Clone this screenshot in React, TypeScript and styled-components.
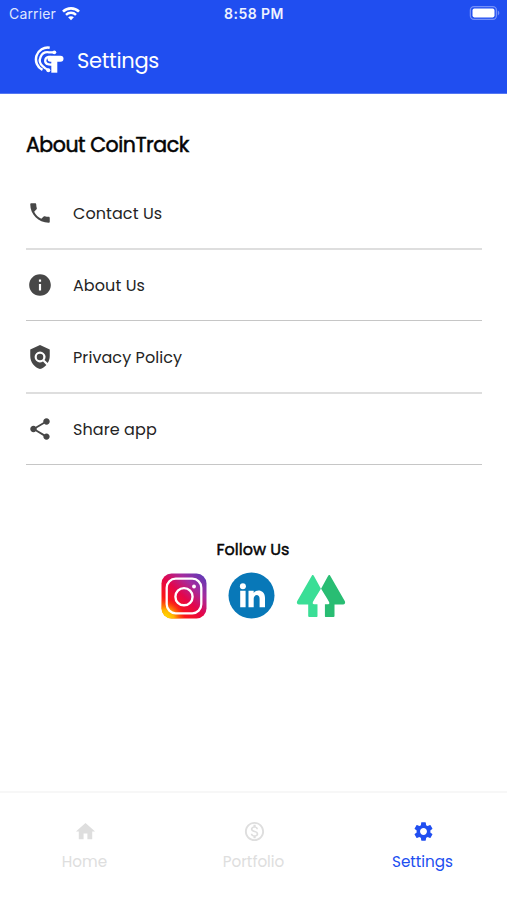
import React from "react";
import styled, { createGlobalStyle } from "styled-components";
import {
  MdPhone,
  MdInfo,
  MdPolicy,
  MdShare,
  MdHome,
  MdSettings,
  MdOutlineMonetizationOn,
} from "react-icons/md";
import type { IconType } from "react-icons";

const BLUE = "#204ef0";

const GlobalStyle = createGlobalStyle`
  * { box-sizing: border-box; }
  body {
    margin: 0;
    background: #fff;
    font-family: Poppins, Inter, "Liberation Sans", sans-serif;
  }
  svg { display: block; flex: none; }
`;

const Screen = styled.div`
  width: 507px;
  height: 900px;
  display: flex;
  flex-direction: column;
  overflow: hidden;
  background: #fff;
`;

const Header = styled.header`
  height: 94px;
  flex: none;
  background: ${BLUE};
  color: #fff;
  border-bottom: 1px solid #5577f2;
`;

const StatusBar = styled.div`
  height: 27px;
  padding: 0 7px 0 9px;
  display: grid;
  grid-template-columns: 1fr auto 1fr;
  align-items: center;
  font-family: Inter, "Liberation Sans", sans-serif;
`;

const Carrier = styled.div`
  display: flex;
  align-items: center;
  gap: 6px;
  font-size: 14px;
  letter-spacing: 0.15px;
  color: #dfe6fe;
`;

const Clock = styled.div`
  padding-right: 1px;
  font-size: 14px;
  font-weight: 600;
  letter-spacing: 0.45px;
  color: #eef2ff;
`;

const BatterySlot = styled.div`
  display: flex;
  justify-content: flex-end;
  padding-bottom: 2px;
`;

const TitleBar = styled.div`
  height: 66px;
  padding-left: 34px;
  display: flex;
  align-items: center;
  gap: 13px;
`;

const ScreenTitle = styled.h1`
  margin: 1px 0 0;
  font-size: 21px;
  font-weight: 400;
  line-height: 30px;
  letter-spacing: -0.3px;
`;

const Content = styled.main`
  flex: 1;
  padding: 36px 25px 0 26px;
`;

const SectionTitle = styled.h2`
  margin: 0;
  height: 30px;
  font-size: 20.5px;
  line-height: 30px;
  font-weight: 400;
  letter-spacing: -0.45px;
  -webkit-text-stroke: 0.5px currentColor;
  color: #050505;
`;

const List = styled.ul`
  list-style: none;
  margin: 0;
  padding: 18px 0 0;
`;

const Row = styled.li<{ $thin?: boolean }>`
  height: ${(p) => (p.$thin ? 71 : 72)}px;
  padding-left: 1px;
  display: flex;
  align-items: center;
  gap: 20px;
  border-bottom: ${(p) => (p.$thin ? "1px solid #c6c6c6" : "2px solid #dedede")};
  color: #474747;

  & + & {
    margin-top: 0;
  }
`;

const TallRow = styled(Row)`
  height: 73px;
`;

const RowLabel = styled.span`
  margin-top: 2px;
  font-size: 16px;
  line-height: 24px;
  letter-spacing: 0.08px;
  color: #242424;
`;

const Follow = styled.section`
  display: flex;
  flex-direction: column;
  align-items: center;
  padding-top: 73px;
`;

const FollowTitle = styled.h3`
  margin: 0;
  padding-right: 2px;
  font-size: 16px;
  font-weight: 400;
  line-height: 24px;
  -webkit-text-stroke: 0.45px currentColor;
  color: #050505;
`;

const Socials = styled.div`
  display: flex;
  align-items: center;
  gap: 21px;
  margin-top: 10px;
  padding-right: 2px;
`;

const TabBar = styled.nav`
  height: 109px;
  flex: none;
  display: grid;
  grid-template-columns: repeat(3, 1fr);
  border-top: 2px solid #f7f7f7;
`;

const Tab = styled.div<{ $active?: boolean }>`
  display: flex;
  flex-direction: column;
  align-items: center;
  padding-top: 27px;
  gap: 7px;
  color: ${(p) => (p.$active ? BLUE : "#dedede")};

  svg {
    margin-left: 2px;
  }
`;

const TabLabel = styled.span`
  font-size: 15.2px;
  line-height: 24px;
`;

const WifiIcon = () => (
  <svg width="18" height="14" viewBox="0 0 18 14" fill="none" stroke="#fff">
    <path d="M1 4.700C5.400.2 12.600.2 17 4.700" strokeWidth="2.600" />
    <path d="M4 7.900c2.800-2.800 7.200-2.800 10 0" strokeWidth="2.400" />
    <path d="M9 13.200 6.100 10.300c1.600-1.500 4.200-1.500 5.800 0Z" fill="#fff" stroke="none" />
  </svg>
);

const BatteryIcon = () => (
  <svg width="31" height="14" viewBox="0 0 31 14" fill="none">
    <rect x="1.400" y=".7" width="26" height="12.600" rx="3.500" stroke="#7590f8" strokeWidth="1.300" />
    <rect x="3.500" y="2.600" width="22" height="8.800" rx="1.800" fill="#fff" />
    <path d="M28.800 4.600c2 .8 2 4 0 4.800Z" fill="#7590f8" />
  </svg>
);

const LogoIcon = () => (
  <svg width="30" height="28" viewBox="0 0 30 28" fill="none" stroke="#fff">
    <path d="M15.700 1.700A11.800 11.800 0 0 0 8.500 23.900" strokeWidth="2.500" />
    <path d="M20.500 6.300H15A7.900 7.900 0 0 0 8.900 20.300Q11 22.800 14.500 24" strokeWidth="2.300" />
    <path d="M16.500 10.900H14.500A3.800 3.800 0 0 0 13 17.900Q15 18.700 18 18.500" strokeWidth="2.300" />
    <circle cx="20.300" cy="6.300" r="1.900" fill="#fff" stroke="none" />
    <circle cx="14.300" cy="24.300" r="2" fill="#fff" stroke="none" />
    <rect x="13.500" y="9.700" width="16" height="6" rx="3" fill="#fff" stroke="none" />
    <path d="M17.300 13h6v13.700h-6Z" fill="#fff" stroke="none" />
  </svg>
);

const InstagramLogo = () => (
  <svg width="46" height="46" viewBox="0 0 46 46" fill="none">
    <defs>
      <linearGradient id="igBase" x1="4" y1="44" x2="42" y2="3" gradientUnits="userSpaceOnUse">
        <stop offset="0" stopColor="#ff7900" />
        <stop offset=".25" stopColor="#fb1617" />
        <stop offset=".5" stopColor="#e3064c" />
        <stop offset=".75" stopColor="#a52b9e" />
        <stop offset="1" stopColor="#6439b5" />
      </linearGradient>
      <radialGradient id="igGlow" cx="4" cy="46" r="20" gradientUnits="userSpaceOnUse">
        <stop offset="0" stopColor="#ffe600" />
        <stop offset=".45" stopColor="#ffc600" stopOpacity=".85" />
        <stop offset="1" stopColor="#ff5000" stopOpacity="0" />
      </radialGradient>
    </defs>
    <rect x=".5" y=".5" width="45" height="45" rx="10" fill="url(#igBase)" />
    <rect x=".5" y=".5" width="45" height="45" rx="10" fill="url(#igGlow)" />
    <rect x="5.700" y="5.700" width="34.600" height="34.600" rx="9" stroke="#fff" strokeWidth="2.300" />
    <circle cx="23" cy="23.700" r="8.600" stroke="#fff" strokeWidth="2.400" />
    <circle cx="33" cy="13.500" r="1.900" fill="#fff" />
  </svg>
);

const LinkedInLogo = () => (
  <svg width="47" height="47" viewBox="0 0 47 47">
    <circle cx="23.500" cy="23.500" r="23" fill="#0878b8" />
    <g fill="#fff">
      <circle cx="14.900" cy="14.200" r="3" />
      <path d="M12.200 18.700h5.400v16.500h-5.400ZM20.500 18.700h5.200v2.200c2.400-4.100 11.300-3.500 11.300 4.800v9.500h-5.400v-8.500c0-5-5.900-4.700-5.900 0v8.500h-5.200Z" />
    </g>
  </svg>
);

const LinktreeLogo = () => (
  <svg width="50" height="44" viewBox="0 0 50 44" strokeLinejoin="round" strokeWidth="2">
    <path d="M16.800 2 2 27.700Q1.500 29.500 3 29.500H13.200V42H20.700V30.500H16.500Q18 26 20 22L24.200 15.500Z" fill="#3ade96" stroke="#3ade96" />
    <path d="M33.200 2 48 27.700Q48.500 29.500 47 29.500H37.500V42H29.700V30.500H33.300Q32 26 30 22L25.800 15.500Z" fill="#29bd73" stroke="#29bd73" />
    <path d="M25 14.500C22 20 19 24 16.800 28.300Q16.200 30.300 18 30.300H21.700V43.500H28.700V30.300H32.300Q33.800 30.300 33.200 28.300C31 24 28 20 25 14.500Z" fill="#fff" />
  </svg>
);

const rows: { label: string; icon: IconType; thin?: boolean; tall?: boolean }[] = [
  { label: "Contact Us", icon: MdPhone },
  { label: "About Us", icon: MdInfo, thin: true },
  { label: "Privacy Policy", icon: MdPolicy, tall: true },
  { label: "Share app", icon: MdShare, thin: true },
];

const tabs: { label: string; icon: IconType; active?: boolean }[] = [
  { label: "Home", icon: MdHome },
  { label: "Portfolio", icon: MdOutlineMonetizationOn },
  { label: "Settings", icon: MdSettings, active: true },
];

export default function App() {
  return (
    <>
      <GlobalStyle />
      <Screen>
        <Header>
          <StatusBar>
            <Carrier>
              Carrier
              <WifiIcon />
            </Carrier>
            <Clock>8:58 PM</Clock>
            <BatterySlot>
              <BatteryIcon />
            </BatterySlot>
          </StatusBar>
          <TitleBar>
            <LogoIcon />
            <ScreenTitle>Settings</ScreenTitle>
          </TitleBar>
        </Header>
        <Content>
          <SectionTitle>About CoinTrack</SectionTitle>
          <List>
            {rows.map(({ label, icon: Icon, thin, tall }) => {
              const Item = tall ? TallRow : Row;
              return (
                <Item key={label} $thin={thin}>
                  <Icon size={26} />
                  <RowLabel>{label}</RowLabel>
                </Item>
              );
            })}
          </List>
          <Follow>
            <FollowTitle>Follow Us</FollowTitle>
            <Socials>
              <InstagramLogo />
              <LinkedInLogo />
              <LinktreeLogo />
            </Socials>
          </Follow>
        </Content>
        <TabBar>
          {tabs.map(({ label, icon: Icon, active }) => (
            <Tab key={label} $active={active}>
              <Icon size={23} />
              <TabLabel>{label}</TabLabel>
            </Tab>
          ))}
        </TabBar>
      </Screen>
    </>
  );
}
